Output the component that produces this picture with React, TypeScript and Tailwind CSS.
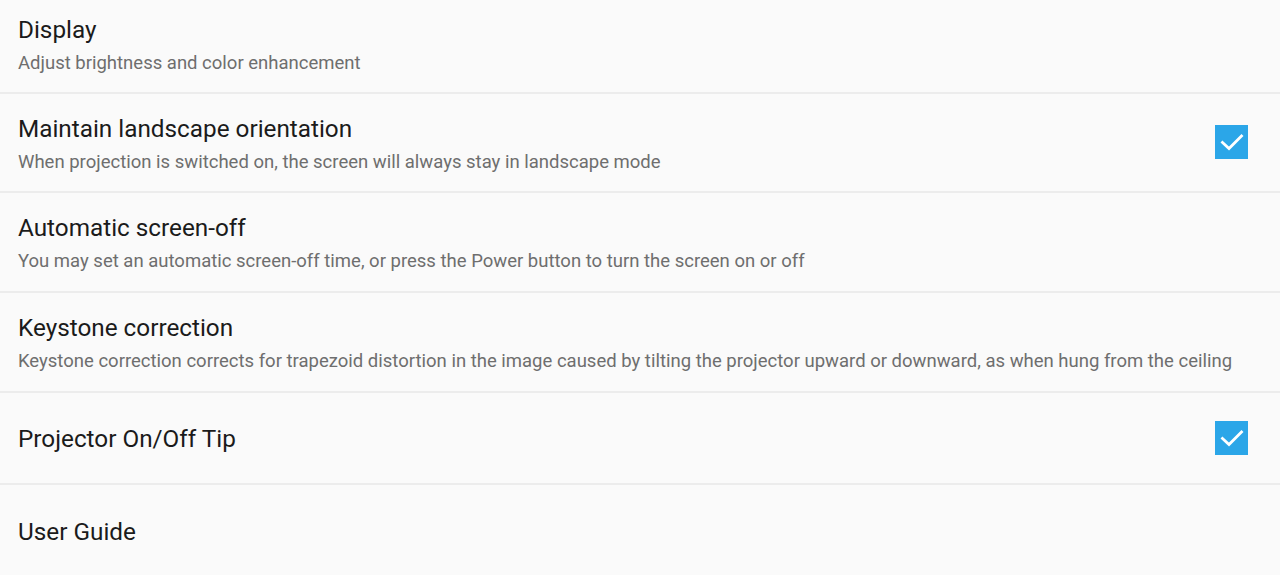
import React from "react";

function Check() {
  return (
    <div className="w-[33px] h-[34px] bg-[#2ba6e8] flex items-center justify-center shrink-0">
      <svg width="26" height="20" viewBox="0 0 26 20" fill="none">
        <path d="M3.5 10.5 L10 16.5 L22.5 4" stroke="white" strokeWidth="2.8" strokeLinecap="square" />
      </svg>
    </div>
  );
}

type Row = { title: string; sub?: string; h: number; pt: number; check?: boolean; center?: boolean };

const rows: Row[] = [
  { title: "Display", sub: "Adjust brightness and color enhancement", h: 94, pt: 15 },
  { title: "Maintain landscape orientation", sub: "When projection is switched on, the screen will always stay in landscape mode", h: 99, pt: 20, check: true },
  { title: "Automatic screen-off", sub: "You may set an automatic screen-off time, or press the Power button to turn the screen on or off", h: 100, pt: 20 },
  { title: "Keystone correction", sub: "Keystone correction corrects for trapezoid distortion in the image caused by tilting the projector upward or downward, as when hung from the ceiling", h: 100, pt: 20 },
  { title: "Projector On/Off Tip", h: 92, pt: 0, check: true, center: true },
];

export default function App() {
  return (
    <div className="w-[1280px] h-[575px] overflow-hidden bg-[#fafafa]" style={{ fontFamily: "Roboto, 'Noto Sans', sans-serif" }}>
      {rows.map((r, i) => (
        <div
          key={i}
          className={`flex pl-[18px] pr-[32px] border-b-2 border-[#ececec] box-border ${r.center ? "items-center" : "items-start"}`}
          style={{ height: r.h, paddingTop: r.pt }}
        >
          <div className="flex-1 flex flex-col">
            <div className="text-[24.3px] leading-[29px] text-[#1b1b1b]">{r.title}</div>
            {r.sub && <div className="text-[18.5px] leading-[24px] mt-[7px] text-[#6e6e6e] whitespace-nowrap">{r.sub}</div>}
          </div>
          {r.check && (
            <div className={r.center ? "" : "mt-[11px]"}>
              <Check />
            </div>
          )}
        </div>
      ))}
      <div className="flex items-center pl-[18px] h-[92px]">
        <div className="text-[24.3px] leading-[29px] text-[#1b1b1b]">User Guide</div>
      </div>
    </div>
  );
}
